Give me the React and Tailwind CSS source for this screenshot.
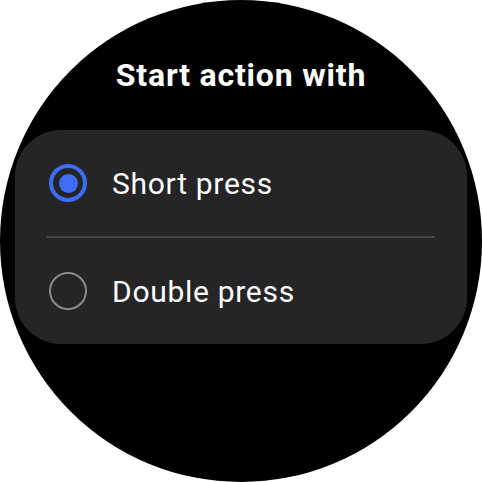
import React from "react";

function Radio({ checked }) {
  if (checked) {
    return (
      <div className="w-[38px] h-[38px] rounded-full border-[4px] border-[#3d6cf5] flex items-center justify-center shrink-0">
        <div className="w-[19px] h-[19px] rounded-full bg-[#3d6cf5]" />
      </div>
    );
  }
  return <div className="w-[38px] h-[38px] rounded-full border-[2.5px] border-[#8a8a8c] shrink-0" />;
}

export default function App() {
  return (
    <div className="w-[482px] h-[482px] bg-white" style={{ fontFamily: "Roboto, 'Noto Sans', sans-serif" }}>
      <div className="w-full h-full rounded-full bg-black flex flex-col items-center pt-[56px]">
        <div className="text-white text-[32px] leading-[38px] font-bold tracking-[0.8px]">Start action with</div>
        <div className="mt-[36px] w-[452px] rounded-[46px] bg-[#252527] flex flex-col">
          <div className="h-[106px] flex items-center pl-[34px] gap-[25px]">
            <Radio checked />
            <span className="text-white text-[30px] leading-[36px] pt-[2px] tracking-[0.7px]">Short press</span>
          </div>
          <div className="mx-[32px] h-[2px] bg-[#464648]" />
          <div className="h-[106px] flex items-center pl-[34px] gap-[25px]">
            <Radio />
            <span className="text-white text-[30px] leading-[36px] pt-[2px] tracking-[0.7px]">Double press</span>
          </div>
        </div>
      </div>
    </div>
  );
}
